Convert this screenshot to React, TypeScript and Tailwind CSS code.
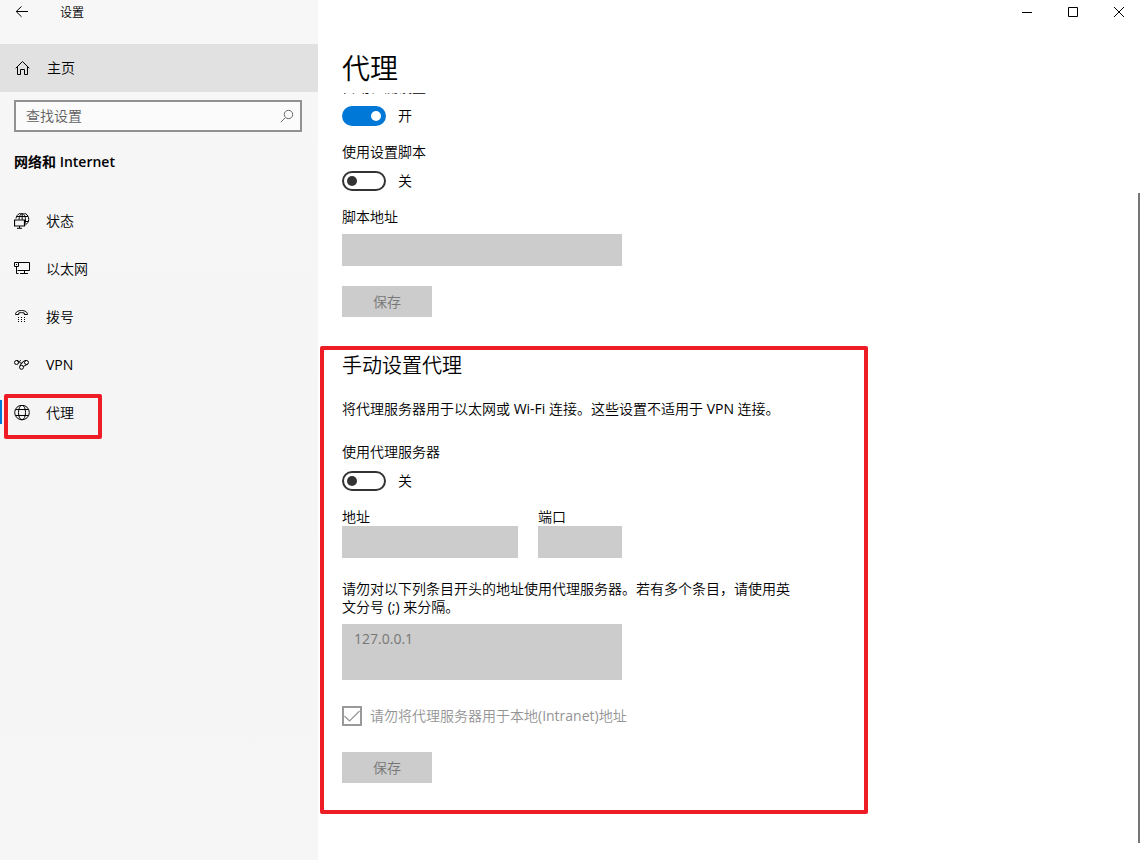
import { useState, type ReactNode } from "react";

const stroke = { fill: "none", stroke: "currentColor", strokeWidth: 1 } as const;

function StatusIcon() {
  return (
    <svg width="16" height="16" viewBox="0 -1 16 16" {...stroke} aria-hidden="true">
      <path d="M2 4.500A6.400 6.400 0 1 1 11.500 10.800M2.500 2.500h11.400M11 7.500h3.300M5 5.500C5.200 2.200 6.500-.4 8.200-.4s3.300 2.700 3.300 6.200c0 2-.3 3.600-.8 4.900M8.200-.4v6" />
      <path d="M.5 6h10v6H.5z" strokeWidth="1.200" />
      <path d="M5.500 12v2M3 14.300h5" />
    </svg>
  );
}

function EthernetIcon() {
  return (
    <svg width="16" height="16" viewBox="0 0 16 16" {...stroke} aria-hidden="true">
      <path d="M4.500 1.500h11v8h-12M.5 1.500h4v4h-4zM2.500 3v1M2.500 5.500v7h2M10.500 9.500v3M6 12.500h8" />
    </svg>
  );
}

function DialUpIcon() {
  return (
    <svg width="16" height="16" viewBox="0 0 16 16" {...stroke} aria-hidden="true">
      <path d="M1.500 5.500C1.500 3 4 1.500 7.500 1.500s6 1.500 6 4h-3.200V4C8.500 3.500 6.500 3.500 4.700 4v1.500z" />
      <path d="M4 8.500h1m2 0h1m2 0h1M4 10.500h1m2 0h1m2 0h1M4 12.500h1m2 0h1m2 0h1" />
    </svg>
  );
}

function VpnIcon() {
  return (
    <svg width="16" height="16" viewBox="0 0 16 16" {...stroke} aria-hidden="true">
      <circle cx="2.500" cy="5.500" r="2" />
      <circle cx="12.500" cy="5.500" r="2" />
      <circle cx="7.500" cy="10.300" r="2" />
      <path d="M2.500 3.500C5 3.200 5.500 6 7 6.300 8.200 6.500 9 5.500 8.800 4.700M12.500 3.500C9.500 3.200 8.300 5.500 7.200 6.800L5.800 9M13.500 7.300 9.200 9.500M4.400 6.300C5 5 5.600 3.700 7 3.500" />
    </svg>
  );
}

function GlobeIcon() {
  return (
    <svg width="16" height="16" viewBox="0 0 16 16" {...stroke} aria-hidden="true">
      <circle cx="8" cy="7.500" r="7.300" />
      <ellipse cx="8" cy="7.500" rx="3.500" ry="7.300" />
      <path d="M1.500 4.500h13M1.500 10.500h13" />
    </svg>
  );
}

function HomeIcon() {
  return (
    <svg width="16" height="16" viewBox="0 0 16 16" {...stroke} aria-hidden="true">
      <path d="M.7 8.300 7.500 1.500l6.800 6.800M2.500 6.500v8h3v-5h4v5h3v-8" />
    </svg>
  );
}

const navItems = [
  { label: "状态", icon: <StatusIcon /> },
  { label: "以太网", icon: <EthernetIcon /> },
  { label: "拨号", icon: <DialUpIcon /> },
  { label: "VPN", icon: <VpnIcon /> },
  { label: "代理", icon: <GlobeIcon />, current: true },
];

function Toggle({ id, label, initial = false }: { id: string; label: string; initial?: boolean }) {
  const [on, setOn] = useState(initial);
  return (
    <div className="flex flex-col gap-2.5">
      <label htmlFor={id}>{label}</label>
      <div className="flex h-5 items-center gap-3">
        <input
          id={id}
          type="checkbox"
          role="switch"
          checked={on}
          onChange={(e) => setOn(e.target.checked)}
          className="flex h-5 w-11 appearance-none items-center rounded-full border-2 border-[#333] px-[3px] before:size-2.5 before:rounded-full before:bg-[#333] checked:justify-end checked:border-[#0078d7] checked:bg-[#0078d7] checked:before:bg-white"
        />
        <span>{on ? "开" : "关"}</span>
      </div>
    </div>
  );
}

function SaveButton() {
  return (
    <button type="button" disabled className="h-[31px] w-[90px] bg-[#ccc] text-[#777]">
      保存
    </button>
  );
}

function CaptionButton({ label, children }: { label: string; children: ReactNode }) {
  return (
    <button type="button" aria-label={label} className="flex h-6 w-[46px] items-center justify-center">
      <svg width="10" height="10" viewBox="0 0 10 10" {...stroke} aria-hidden="true">
        {children}
      </svg>
    </button>
  );
}

function Sidebar() {
  return (
    <aside className="w-[318px] shrink-0 bg-linear-to-b from-[#f7f7f7] via-[#f5f5f6] to-[#f7f6f6]">
      <div className="flex h-11 items-start">
        <button type="button" aria-label="返回" className="flex h-6 w-11 items-center justify-center">
          <svg width="14" height="12" viewBox="0 0 14 12" {...stroke} aria-hidden="true">
            <path d="M6.500 .5 1.200 5.500l5.300 5.300M1.200 5.500H13" />
          </svg>
        </button>
        <span className="ml-4 text-xs leading-[26px]">设置</span>
      </div>
      <a href="#home" className="flex h-12 items-center gap-4 bg-[#e1e1e1] px-[15px]">
        <HomeIcon />
        主页
      </a>
      <div className="mt-2 mr-4 ml-3.5 flex h-8 items-center border-2 border-[#919191] bg-[#fbfbfb] pr-1.5 pl-2.5">
        <input
          type="search"
          aria-label="查找设置"
          placeholder="查找设置"
          className="min-w-0 flex-1 bg-transparent outline-none placeholder:text-[#606060]"
        />
        <svg width="14" height="14" viewBox="0 0 14 14" {...stroke} className="text-[#6a6a6a]" aria-hidden="true">
          <circle cx="8.500" cy="5.500" r="4.200" />
          <path d="M5.500 8.500.8 13.200" />
        </svg>
      </div>
      <h2 className="mt-[21px] px-3.5 font-['Open_Sans','Noto_Sans_CJK_SC',sans-serif] font-semibold">网络和 Internet</h2>
      <nav className="mt-[26px]">
        {navItems.map((item) => (
          <a
            key={item.label}
            href="#"
            aria-current={item.current ? "page" : undefined}
            className="relative flex h-12 items-center gap-4 px-3.5"
          >
            {item.current && (
              <>
                <span className="absolute top-[11px] left-0 h-6 w-0.5 bg-[#0078d7]" />
                <span className="absolute top-[5px] left-1 h-[45px] w-[98px] rounded-xs border-4 border-[#ee1c25]" />
              </>
            )}
            {item.icon}
            {item.label}
          </a>
        ))}
      </nav>
    </aside>
  );
}

const field = "block bg-[#ccc] px-3 text-[#777] disabled:opacity-100";

export default function App() {
  return (
    <div className="flex min-h-screen bg-white font-['Open_Sans','Noto_Sans_CJK_SC_DemiLight','Noto_Sans_CJK_SC',sans-serif] text-sm leading-[18px] text-black">
      <Sidebar />
      <main className="flex min-w-0 flex-1 flex-col">
        <div className="flex h-11 items-start justify-end">
          <CaptionButton label="最小化">
            <path d="M0 5.500h10" />
          </CaptionButton>
          <CaptionButton label="最大化">
            <path d="M.5.5h9v9h-9z" />
          </CaptionButton>
          <CaptionButton label="关闭">
            <path d="m0 0 10 10M10 0 0 10" />
          </CaptionButton>
        </div>
        <h1 className="h-[49px] px-6 text-[28px] leading-[49px] font-[350]">代理</h1>
        <div className="relative flex-1 overflow-hidden">
          <div className="-mt-[15px] px-6 pb-8">
            <div className="flex flex-col gap-[17px]">
              <Toggle id="auto-detect" label="自动检测设置" initial />
              <Toggle id="use-script" label="使用设置脚本" />
              <div>
                <label htmlFor="script-url">脚本地址</label>
                <input id="script-url" disabled className={`${field} mt-2 h-8 w-[280px]`} />
              </div>
            </div>
            <div className="mt-5">
              <SaveButton />
            </div>

            <section className="relative mt-[35px] max-w-[500px]">
              <span className="pointer-events-none absolute -top-1.5 -right-[26px] -bottom-[31px] -left-[22px] rounded-xs border-4 border-[#ee1c25]" />
              <h2 className="text-xl leading-7 font-[350]">手动设置代理</h2>
              <p className="mt-5">将代理服务器用于以太网或 Wi-Fi 连接。这些设置不适用于 VPN 连接。</p>
              <div className="mt-[25px] flex flex-col gap-[17px]">
                <Toggle id="use-proxy" label="使用代理服务器" />
                <div className="flex gap-5">
                  <div>
                    <label htmlFor="address" className="block">地址</label>
                    <input id="address" disabled className={`${field} h-8 w-44`} />
                  </div>
                  <div>
                    <label htmlFor="port" className="block">端口</label>
                    <input id="port" disabled className={`${field} h-8 w-21`} />
                  </div>
                </div>
              </div>
              <label htmlFor="bypass" className="mt-[22px] block max-w-[456px]">
                请勿对以下列条目开头的地址使用代理服务器。若有多个条目，请使用英文分号 (;) 来分隔。
              </label>
              <textarea
                id="bypass"
                disabled
                defaultValue="127.0.0.1"
                className={`${field} mt-2 h-14 w-[280px] resize-none py-1.5`}
              />
              <div className="mt-[26px] flex h-5 items-center gap-2 text-[#949494]">
                <div className="grid">
                  <input
                    id="local"
                    type="checkbox"
                    disabled
                    defaultChecked
                    className="col-start-1 row-start-1 size-5 appearance-none border-2 border-[#999]"
                  />
                  <svg width="20" height="20" viewBox="0 0 20 20" {...stroke} className="col-start-1 row-start-1" aria-hidden="true">
                    <path d="m2.500 10 5 5L17.500 5" strokeWidth="1.200" />
                  </svg>
                </div>
                <label htmlFor="local">请勿将代理服务器用于本地(Intranet)地址</label>
              </div>
              <div className="mt-[26px]">
                <SaveButton />
              </div>
            </section>
          </div>
          <span className="absolute top-[100px] right-0.5 bottom-[17px] w-0.5 bg-[#767676]" />
        </div>
      </main>
    </div>
  );
}
